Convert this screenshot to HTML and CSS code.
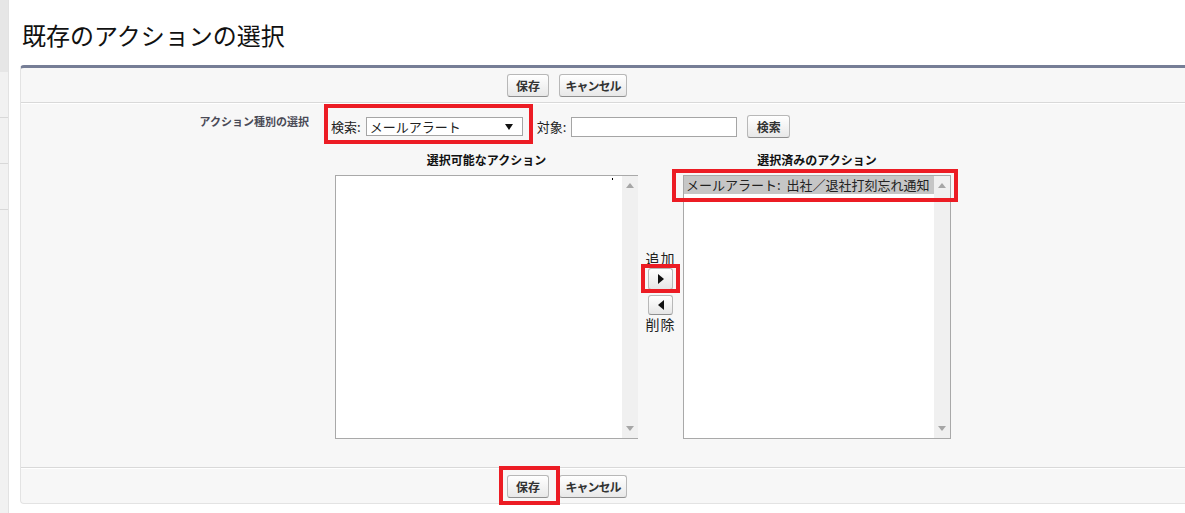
FILE: index.html
```html
<!DOCTYPE html>
<html lang="ja">
<head>
  <meta charset="UTF-8" />
  <title>既存のアクションの選択</title>
  <link rel="stylesheet" href="styles.css">
</head>
<body>
  <div class="page">
    <div class="strip">
      <div class="strip-top"></div>
      <div class="strip-seg"></div>
      <div class="strip-seg"></div>
      <div class="strip-seg"></div>
      <div class="strip-rest"></div>
    </div>

    <div class="main">
      <h1 class="title">既存のアクションの選択</h1>

      <div class="panel">
        <!-- ボタン (上) -->
        <div class="btn-row top">
          <button class="btn btn-save">保存</button>
          <button class="btn btn-cancel">キャンセル</button>
        </div>

        <div class="form">
          <div class="field-row">
            <div class="field-label">アクション種別の選択</div>
            <div class="field-body">
              <span class="search marked">
                <span class="search-label">検索:</span>
                <span class="select">
                  <span class="select-text">メールアラート</span>
                  <svg class="select-arrow" width="8" height="6" viewBox="0 0 8 6"><path d="M0 0 H8 L4 6 Z" fill="#111"/></svg>
                </span>
              </span>
              <span class="target-label">対象:</span>
              <input class="target" type="text">
              <button class="btn btn-find">検索</button>
            </div>
          </div>

          <div class="dual">
            <div class="col col-left">
              <div class="col-title">選択可能なアクション</div>
              <div class="list list-left">
                <div class="list-body"><span class="dot"></span></div>
                <div class="track">
                  <svg width="8" height="5" viewBox="0 0 8 5"><path d="M0 5 L4 0 L8 5 Z" fill="#a6a6a6"/></svg>
                  <svg width="8" height="5" viewBox="0 0 8 5"><path d="M0 0 H8 L4 5 Z" fill="#a6a6a6"/></svg>
                </div>
              </div>
            </div>

            <div class="mid">
              <div class="mid-label">追加</div>
              <button class="arrow-btn marked-add">
                <svg width="6" height="10" viewBox="0 0 6 10"><path d="M0 0 L6 5 L0 10 Z" fill="#111"/></svg>
              </button>
              <button class="arrow-btn arrow-del">
                <svg width="6" height="10" viewBox="0 0 6 10"><path d="M6 0 L0 5 L6 10 Z" fill="#111"/></svg>
              </button>
              <div class="mid-label">削除</div>
            </div>

            <div class="col col-right">
              <div class="col-title">選択済みのアクション</div>
              <div class="list list-right">
                <div class="list-body">
                  <div class="option selected">メールアラート:&nbsp; 出社／退社打刻忘れ通知</div>
                </div>
                <div class="track">
                  <svg width="8" height="5" viewBox="0 0 8 5"><path d="M0 5 L4 0 L8 5 Z" fill="#a6a6a6"/></svg>
                  <svg width="8" height="5" viewBox="0 0 8 5"><path d="M0 0 H8 L4 5 Z" fill="#a6a6a6"/></svg>
                </div>
                <span class="mark-selected"></span>
              </div>
            </div>
          </div>
        </div>

        <!-- ボタン (下) -->
        <div class="btn-row bottom">
          <button class="btn btn-save marked-save">保存</button>
          <button class="btn btn-cancel">キャンセル</button>
        </div>
      </div>
    </div>
  </div>
</body>
</html>
```

FILE: styles.css
```css
body {
  margin: 0;
  background: #fff;
  font-family: "Noto Sans CJK JP", "Liberation Sans", sans-serif;
  color: #222;
  overflow: hidden;
}

.page {
  display: flex;
  height: 100vh;
}

/* 左の細いバー */
.strip {
  width: 8px;
  flex: none;
  display: flex;
  flex-direction: column;
  border-right: 1px solid #e2e2e2;
}

.strip-top {
  height: 72px;
  background: #e6e6e6;
}

.strip-seg {
  height: 45px;
  background: #f1f1f1;
  border-bottom: 1px solid #d8d8d8;
}

.strip-rest {
  flex: 1;
  background: #f1f1f1;
}

.main {
  flex: 1;
  min-width: 0;
}

.title {
  margin: 0 0 15px;
  padding: 20px 0 0 13px;
  font-size: 24px;
  line-height: 30px;
  font-weight: normal;
  color: #111;
}

.panel {
  margin-left: 11px;
  background: #f7f7f7;
  border-top: 3px solid #767e96;
  border-left: 1px solid #e3e3e3;
  border-bottom: 1px solid #e3e3e3;
  border-radius: 4px 0 0 4px;
}

.btn-row {
  display: flex;
  gap: 10px;
  padding-left: 486px;
  box-sizing: border-box;
}

.btn-row.top {
  padding-top: 6px;
  border-bottom: 1px solid #d9d9d9;
  height: 35px;
}

.btn-row.bottom {
  padding-top: 7px;
  height: 36px;
  border-top: 1px solid #d9d9d9;
  box-shadow: inset 0 1px 0 #fff;
}

.btn {
  height: 23px;
  padding: 0;
  border: 1px solid #b8b8b8;
  border-bottom-color: #8f8f8f;
  border-radius: 3px;
  background: linear-gradient(#ffffff, #e8e8e8);
  font-family: inherit;
  font-size: 12px;
  font-weight: bold;
  line-height: 20px;
  color: #333;
  cursor: pointer;
}

.btn-save { width: 42px; }
.btn-cancel { width: 68px; letter-spacing: -1px; }
.btn-find { width: 43px; margin-left: 10px; }

.form {
  border-top: 1px solid #fff;
  padding: 6px 0 28px;
}

.field-row {
  display: flex;
  height: 33px;
}

.field-label {
  width: 288px;
  flex: none;
  text-align: right;
  padding-top: 3px;
  font-size: 11px;
  font-weight: bold;
  line-height: 16px;
  color: #4a4a56;
}

.field-body {
  display: flex;
  align-items: center;
  margin-left: 22px;
  font-size: 13px;
}

.search {
  display: inline-flex;
  align-items: center;
  height: 19px;
}

.select {
  display: inline-flex;
  align-items: center;
  justify-content: space-between;
  width: 157px;
  height: 19px;
  margin-left: 5px;
  padding: 0 9px 0 3px;
  box-sizing: border-box;
  background: #fff;
  border: 1px solid #a5a5a5;
  line-height: 17px;
}

.target-label {
  margin-left: 14px;
}

.target {
  width: 166px;
  height: 20px;
  margin: 0 0 0 5px;
  padding: 0;
  box-sizing: border-box;
  border: 1px solid #a5a5a5;
  background: #fff;
}

/* 赤い注目枠 */
.marked,
.marked-add,
.marked-save {
  position: relative;
}

.marked::after,
.marked-add::after,
.marked-save::after,
.mark-selected {
  content: "";
  position: absolute;
  border: 4px solid #ec1c24;
  pointer-events: none;
}

.marked::after {
  top: -13px;
  bottom: -8px;
  left: -7px;
  right: -10px;
}

.marked-add::after {
  top: -5px;
  bottom: -4px;
  left: -8px;
  right: -8px;
}

.marked-save::after {
  top: -10px;
  bottom: -8px;
  left: -9px;
  right: -12px;
}

.dual {
  display: flex;
  margin: 9px 0 0 314px;
}

.col-title {
  text-align: center;
  font-size: 12px;
  font-weight: bold;
  line-height: 16px;
  color: #111;
  margin-bottom: 7px;
}

.list {
  position: relative;
  display: flex;
  height: 264px;
  box-sizing: border-box;
  background: #fff;
  border: 1px solid #a9a9a9;
}

.list-left {
  width: 303px;
  border-right: none;
}

.list-right {
  width: 268px;
}

.list-body {
  flex: 1;
  position: relative;
}

.dot {
  position: absolute;
  top: 2px;
  right: 9px;
  width: 1px;
  height: 2px;
  background: #000;
}

.track {
  width: 16px;
  flex: none;
  background: #f0f0f0;
  display: flex;
  flex-direction: column;
  justify-content: space-between;
  align-items: center;
  padding: 7px 0 7px;
}

.option {
  font-size: 13px;
  line-height: 18px;
  padding-left: 2px;
  white-space: nowrap;
}

.selected {
  background: #c6c6c6;
  color: #222;
}

.mark-selected {
  top: -7px;
  left: -12px;
  width: 286px;
  height: 33px;
  box-sizing: border-box;
}

.mid {
  width: 45px;
  flex: none;
  display: flex;
  flex-direction: column;
  align-items: center;
  padding-top: 97px;
}

.mid-label {
  font-size: 14px;
  line-height: 18px;
  letter-spacing: 1px;
  color: #222;
}

.arrow-btn {
  width: 25px;
  height: 22px;
  margin-top: 1px;
  padding: 0;
  display: flex;
  align-items: center;
  justify-content: center;
  border: 1px solid #b8b8b8;
  border-bottom-color: #8f8f8f;
  border-radius: 3px;
  background: linear-gradient(#ffffff, #e6e6e6);
}

.arrow-del {
  height: 20px;
  margin-top: 5px;
}
```
